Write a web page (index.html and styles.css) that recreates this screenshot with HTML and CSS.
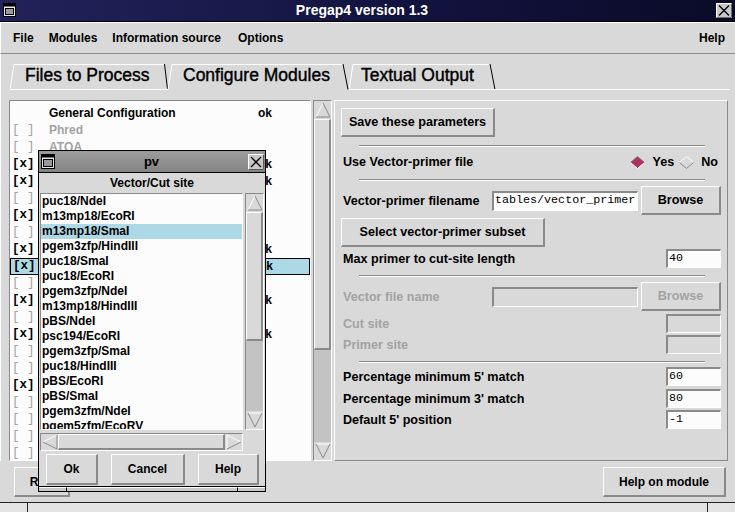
FILE: index.html
```html
<!DOCTYPE html>
<html>
<head>
<meta charset="utf-8">
<title>Pregap4</title>
<link rel="stylesheet" href="styles.css">
</head>
<body>
<div class="titlebar">
  <svg class="wicon" width="13" height="14" viewBox="0 0 13 14"><rect x="0.5" y="0.5" width="12" height="13" fill="#e8e8e8" stroke="#000"/><rect x="0.5" y="0.5" width="12" height="3" fill="#000"/><rect x="2.5" y="5.5" width="8" height="6" fill="#9a9a9a" stroke="#000"/></svg>
  <span class="ttl">Pregap4 version 1.3</span>
  <svg class="wclose" width="16" height="15" viewBox="0 0 16 15"><rect x="0.5" y="0.5" width="15" height="14" fill="#c8c8c8" stroke="#ffffff"/><path d="M15.5 0.5V14.5H0.5" fill="none" stroke="#6a6a6a"/><path d="M3 2.5L13 12.5M13 2.5L3 12.5" stroke="#000" stroke-width="1.3"/></svg>
</div>
<div class="menubar">
  <span>File</span><span>Modules</span><span>Information source</span><span>Options</span><span class="grow"></span><span>Help</span>
</div>
<div class="tabs">
  <div class="tab t1">
    <svg class="tabshape" width="158" height="26" viewBox="0 0 158 26"><path d="M0 25.5L4 0.5H154" fill="none" stroke="#fff"/><path d="M154.5 0L157.5 25" stroke="#000"/><path d="M0 25.5H158" stroke="#fff"/></svg>
    <span>Files to Process</span>
  </div>
  <div class="tab t2">
    <svg class="tabshape" width="182" height="26" viewBox="0 0 182 26"><path d="M1 25.5L5 0.5H176" fill="none" stroke="#fff"/><path d="M176 0L181 25.5" stroke="#000"/></svg>
    <span>Configure Modules</span>
  </div>
  <div class="tab t3">
    <svg class="tabshape" width="147" height="26" viewBox="0 0 147 26"><path d="M0 25.5L4 0.5H141" fill="none" stroke="#fff"/><path d="M141 0L146 25.5" stroke="#000"/><path d="M0 25.5H147" stroke="#fff"/></svg>
    <span>Textual Output</span>
  </div>
  <div class="tabfill"></div>
</div>

<div class="main">
  <div class="listframe">
    <div class="lrow"><span class="cb"></span><span class="nm">General Configuration</span><span class="st">ok</span></div>
    <div class="lrow dis"><span class="cb">[ ]</span><span class="nm">Phred</span><span class="st"></span></div>
    <div class="lrow dis"><span class="cb">[ ]</span><span class="nm">ATQA</span><span class="st"></span></div>
    <div class="lrow"><span class="cb">[x]</span><span class="nm"></span><span class="st">ok</span></div>
    <div class="lrow"><span class="cb">[x]</span><span class="nm"></span><span class="st">ok</span></div>
    <div class="lrow dis"><span class="cb">[ ]</span><span class="nm"></span><span class="st"></span></div>
    <div class="lrow"><span class="cb">[x]</span><span class="nm"></span><span class="st"></span></div>
    <div class="lrow dis"><span class="cb">[ ]</span><span class="nm"></span><span class="st"></span></div>
    <div class="lrow"><span class="cb">[x]</span><span class="nm"></span><span class="st">ok</span></div>
    <div class="lrow sel"><span class="cb">[x]</span><span class="nm"></span><span class="st">ok</span></div>
    <div class="lrow dis"><span class="cb">[ ]</span><span class="nm"></span><span class="st"></span></div>
    <div class="lrow"><span class="cb">[x]</span><span class="nm"></span><span class="st">ok</span></div>
    <div class="lrow dis"><span class="cb">[ ]</span><span class="nm"></span><span class="st"></span></div>
    <div class="lrow"><span class="cb">[x]</span><span class="nm"></span><span class="st">ok</span></div>
    <div class="lrow dis"><span class="cb">[ ]</span><span class="nm"></span><span class="st"></span></div>
    <div class="lrow dis"><span class="cb">[ ]</span><span class="nm"></span><span class="st"></span></div>
    <div class="lrow"><span class="cb">[x]</span><span class="nm"></span><span class="st"></span></div>
    <div class="lrow dis"><span class="cb">[ ]</span><span class="nm"></span><span class="st"></span></div>
    <div class="lrow dis"><span class="cb">[ ]</span><span class="nm"></span><span class="st"></span></div>
    <div class="lrow dis"><span class="cb">[ ]</span><span class="nm"></span><span class="st"></span></div>
    <div class="lrow dis"><span class="cb">[ ]</span><span class="nm"></span><span class="st"></span></div>
  </div>

  <div class="vscroll vs-main">
    <div class="arrow"><svg width="16" height="16" viewBox="0 0 16 16"><path d="M1 15L8 1" stroke="#fff" fill="none"/><path d="M8 1L15 15H1" stroke="#8a8a8a" fill="none"/></svg></div>
    <div class="slider s-main"></div>
    <div class="trough"></div>
    <div class="arrow"><svg width="16" height="16" viewBox="0 0 16 16"><path d="M1 1H15" stroke="#fff" fill="none"/><path d="M1 1L8 15L15 1" stroke="#8a8a8a" fill="none"/></svg></div>
  </div>

  <div class="panel">
    <div class="prow r-save"><button class="btn b-save">Save these parameters</button></div>
    <div class="sep s-a"></div>
    <div class="prow r-use">
      <span class="lbl">Use Vector-primer file</span>
      <span class="radio"><svg width="15" height="13" viewBox="0 0 15 13"><path d="M7.5 0.5L14.5 6.5L7.5 12.5L0.5 6.5Z" fill="#b03060"/><path d="M0.5 6.5L7.5 0.5L14.5 6.5" fill="none" stroke="#7a7a7a"/><path d="M0.5 6.5L7.5 12.5L14.5 6.5" fill="none" stroke="#ffffff"/></svg>Yes</span>
      <span class="radio"><svg width="15" height="13" viewBox="0 0 15 13"><path d="M0.5 6.5L7.5 0.5L14.5 6.5" fill="none" stroke="#ffffff"/><path d="M0.5 6.5L7.5 12.5L14.5 6.5" fill="none" stroke="#8a8a8a"/></svg>No</span>
    </div>
    <div class="sep s-b"></div>
    <div class="prow r-file">
      <span class="lbl">Vector-primer filename</span>
      <span class="entry e-long">tables/vector_primer</span>
      <button class="btn b-browse">Browse</button>
    </div>
    <div class="prow r-select"><button class="btn b-select">Select vector-primer subset</button></div>
    <div class="prow r-small m2"><span class="lbl">Max primer to cut-site length</span><span class="entry e-small">40</span></div>
    <div class="sep s-c"></div>
    <div class="prow r-file r-vfile dis">
      <span class="lbl">Vector file name</span>
      <span class="entry e-long e-dis"></span>
      <button class="btn b-browse">Browse</button>
    </div>
    <div class="prow r-small m3 dis"><span class="lbl">Cut site</span><span class="entry e-small e-dis"></span></div>
    <div class="prow r-small m2 dis"><span class="lbl">Primer site</span><span class="entry e-small e-dis"></span></div>
    <div class="sep s-d"></div>
    <div class="prow r-small m4"><span class="lbl">Percentage minimum 5' match</span><span class="entry e-small">60</span></div>
    <div class="prow r-small m3"><span class="lbl">Percentage minimum 3' match</span><span class="entry e-small">80</span></div>
    <div class="prow r-small m2"><span class="lbl">Default 5' position</span><span class="entry e-small">-1</span></div>
  </div>
</div>

<div class="bottom">
  <button class="btn b-run">Run</button>
  <span class="grow"></span>
  <button class="btn b-help">Help on module</button>
</div>
<div class="status"><span class="f1"></span><span class="f2"></span><span class="f3"></span></div>

<div class="popup">
  <div class="ptitle">
    <svg class="wicon" width="14" height="15" viewBox="0 0 14 15"><rect x="0.5" y="0.5" width="13" height="14" fill="#e8e8e8" stroke="#000"/><rect x="0.5" y="0.5" width="13" height="3" fill="#000"/><rect x="2.5" y="5.5" width="9" height="7" fill="#9a9a9a" stroke="#000"/></svg>
    <span class="ttl">pv</span>
    <svg class="wclose" width="16" height="16" viewBox="0 0 16 16"><rect x="0.5" y="0.5" width="15" height="15" fill="#c8c8c8" stroke="#ffffff"/><path d="M15.5 0.5V15.5H0.5" fill="none" stroke="#5a5a5a"/><path d="M3 3L13 13M13 3L3 13" stroke="#000" stroke-width="1.3"/></svg>
  </div>
  <div class="plabel">Vector/Cut site</div>
  <div class="plist">
    <div class="lbox">
      <div>puc18/NdeI</div>
      <div>m13mp18/EcoRI</div>
      <div class="psel">m13mp18/SmaI</div>
      <div>pgem3zfp/HindIII</div>
      <div>puc18/SmaI</div>
      <div>puc18/EcoRI</div>
      <div>pgem3zfp/NdeI</div>
      <div>m13mp18/HindIII</div>
      <div>pBS/NdeI</div>
      <div>psc194/EcoRI</div>
      <div>pgem3zfp/SmaI</div>
      <div>puc18/HindIII</div>
      <div>pBS/EcoRI</div>
      <div>pBS/SmaI</div>
      <div>pgem3zfm/NdeI</div>
      <div>pgem5zfm/EcoRV</div>
    </div>
    <div class="vscroll vs-pop">
      <div class="arrow"><svg width="16" height="16" viewBox="0 0 16 16"><path d="M1 15L8 1" stroke="#fff" fill="none"/><path d="M8 1L15 15H1" stroke="#8a8a8a" fill="none"/></svg></div>
      <div class="slider s-pop"></div>
      <div class="trough"></div>
      <div class="arrow"><svg width="16" height="16" viewBox="0 0 16 16"><path d="M1 1H15" stroke="#fff" fill="none"/><path d="M1 1L8 15L15 1" stroke="#8a8a8a" fill="none"/></svg></div>
    </div>
    <div class="hscroll">
      <div class="harrow"><svg width="16" height="16" viewBox="0 0 16 16"><path d="M15 1L1 8" stroke="#fff" fill="none"/><path d="M1 8L15 15V1" stroke="#8a8a8a" fill="none"/></svg></div>
      <div class="hslider"></div>
      <div class="harrow"><svg width="16" height="16" viewBox="0 0 16 16"><path d="M1 15V1L15 8" stroke="#fff" fill="none"/><path d="M15 8L1 15" stroke="#8a8a8a" fill="none"/></svg></div>
    </div>
  </div>
  <div class="pbtns">
    <button class="btn pb-ok">Ok</button>
    <button class="btn pb-cancel">Cancel</button>
    <button class="btn pb-help">Help</button>
  </div>
  <div class="pbottom"><span class="g1"></span><span class="g2"></span><span class="g3"></span></div>
</div>
</body>
</html>
```
FILE: styles.css
```css
* { box-sizing: border-box; margin: 0; padding: 0; }
html, body { width: 735px; height: 512px; overflow: hidden; }
body {
  position: relative;
  background: #d9d9d9;
  font-family: "Liberation Sans", Arial, sans-serif;
  font-size: 12px;
  font-weight: bold;
  color: #000;
}
button { font: inherit; color: inherit; cursor: default; }

/* ---------- main title bar ---------- */
.titlebar {
  height: 22px;
  display: flex;
  align-items: center;
  padding: 0 3px 1px 3px;
  background: linear-gradient(to right, #22225a, #131340 55%, #0a0a28);
  border-bottom: 1px solid #000;
}
.titlebar .ttl {
  flex: 1;
  text-align: center;
  color: #fff;
  font-size: 14px;
  padding-right: 8px;
}
.wicon, .wclose { flex: none; display: block; }

/* ---------- menu ---------- */
.menubar {
  height: 32px;
  display: flex;
  align-items: center;
  gap: 15px;
  padding: 0 10px 0 12px;
  border-top: 1px solid #fff;
  border-left: 1px solid #fff;
  border-bottom: 1px solid #8a8a8a;
}
.menubar span:nth-child(4) { margin-left: 2px; }
.grow { flex: 1; }

/* ---------- tabs ---------- */
.tabs {
  height: 36px;
  display: flex;
  padding: 10px 0 0 10px;
  border-left: 1px solid #fff;
}
.tab {
  position: relative;
  height: 26px;
  flex: none;
  font-weight: normal;
  font-size: 17.5px;
  line-height: 23px;
  -webkit-text-stroke: 0.4px #000;
}
.tabshape { position: absolute; left: 0; top: 0; }
.tab span { position: relative; }
.t1 { width: 158px; padding-left: 15px; margin-left: -1px; }
.t2 { width: 182px; padding-left: 16px; margin-left: -1px; }
.t3 { width: 147px; padding-left: 12px; }
.tabfill { flex: 1; height: 26px; border-bottom: 1px solid #fff; margin-right: 5px; }

/* ---------- main area ---------- */
.main {
  height: 371px;
  padding: 10px 7px 0 8px;
  display: grid;
  grid-template-columns: 302px 19px 1fr;
  column-gap: 2px;
  border-left: 1px solid #fff;
}
.listframe {
  background: #fcfcfc;
  border: 1px solid;
  border-color: #8a8a8a #ffffff #ffffff #8a8a8a;
  padding-top: 4px;
  overflow: hidden;
}
.lrow {
  height: 17px;
  display: grid;
  grid-template-columns: 37px 209px 1fr;
  align-items: center;
  padding-left: 2px;
  line-height: 15px;
}
.cb {
  font-family: "Liberation Mono", "Courier New", monospace;
  font-size: 12.5px;
  font-weight: bold;
  white-space: pre;
}
.lrow.dis .cb { color: #a3a3a3; font-weight: normal; }
.lrow.dis .nm { color: #a3a3a3; }
.lrow.sel { background: #add8e6; border: 1px solid #000; height: 17px; }
.lrow.sel .cb { border-right: 1px solid #000; height: 15px; margin-left: -1px; padding-left: 1px; width: 27px; }

/* ---------- scrollbars ---------- */
.vscroll {
  display: flex;
  flex-direction: column;
  background: #c3c3c3;
  border: 1px solid;
  border-color: #8a8a8a #ffffff #ffffff #8a8a8a;
}
.arrow, .harrow {
  flex: none;
  display: flex;
  align-items: center;
  justify-content: center;
  background: #d9d9d9;
}
.arrow { height: 18px; }
.slider {
  flex: none;
  background: #d9d9d9;
  border: 1px solid;
  border-width: 1px 2px 2px 1px;
  border-color: #ffffff #8a8a8a #8a8a8a #ffffff;
}
.s-main { height: 231px; }
.s-pop { height: 129px; }
.trough { flex: 1; }

/* ---------- right panel ---------- */
.panel {
  border: 1px solid;
  border-color: #ffffff #8a8a8a #8a8a8a #ffffff;
  padding: 7px 6px 0 8px;
  display: flex;
  flex-direction: column;
  font-size: 12.6px;
}
.prow { display: flex; align-items: center; flex: none; }
.lbl { flex: 1; white-space: nowrap; }
.dis .lbl, .dis .btn { color: #a3a3a3; }
.btn {
  display: flex;
  align-items: center;
  justify-content: center;
  background: #d9d9d9;
  border: 1px solid;
  border-width: 1px 2px 2px 1px;
  border-color: #ffffff #8a8a8a #8a8a8a #ffffff;
  white-space: nowrap;
}
.r-save { height: 29px; }
.b-save { width: 154px; height: 29px; margin-left: -2px; }
.sep {
  flex: none;
  height: 2px;
  margin: 0 16px 0 16px;
  border-top: 1px solid #8a8a8a;
  border-bottom: 1px solid #ffffff;
}
.s-a { margin-top: 8px; }
.s-b { margin-top: 8px; }
.s-c { margin-top: 7px; }
.s-d { margin-top: 7px; }
.r-use { height: 18px; margin-top: 6px; padding-right: 3px; }
.radio { display: flex; align-items: center; gap: 7px; }
.radio + .radio { margin-left: 5px; }
.r-file { height: 29px; margin-top: 5px; }
.r-vfile { margin-top: 5px; }
.entry {
  display: block;
  background: #fcfcfc;
  border: 1px solid;
  border-width: 2px 1px 1px 2px;
  border-color: #8a8a8a #ffffff #ffffff #8a8a8a;
  font-family: "Liberation Mono", "Courier New", monospace;
  font-weight: normal;
  font-size: 11.7px;
  line-height: 15px;
  padding-left: 1px;
  white-space: nowrap;
  overflow: hidden;
}
.e-long { width: 146px; height: 20px; margin-right: 3px; }
.e-small { width: 55px; height: 19px; }
.e-dis { background: #d9d9d9; }
.b-browse { width: 80px; height: 29px; }
.r-select { height: 29px; margin-top: 3px; }
.b-select { width: 204px; height: 29px; margin-left: -2px; }
.r-small { height: 19px; }
.m2 { margin-top: 2px; }
.m3 { margin-top: 3px; }
.m4 { margin-top: 4px; }

/* ---------- bottom row + status ---------- */
.bottom {
  height: 30px;
  margin-top: 6px;
  display: flex;
  padding: 0 9px 0 14px;
}
.b-run { width: 56px; height: 30px; }
.b-help { width: 123px; height: 30px; }
.status {
  height: 10px;
  margin-top: 5px;
  display: flex;
  border-top: 1px solid #222;
  background: #e4e4e4;
}
.status .f1 { width: 28px; border-right: 1px solid #222; }
.status .f2 { flex: 1; border-right: 1px solid #222; }
.status .f3 { width: 27px; }

/* ---------- popup window "pv" ---------- */
.popup {
  position: absolute;
  left: 38px;
  top: 150px;
  width: 228px;
  height: 342px;
  border: 1px solid #000;
  background: #d9d9d9;
  display: flex;
  flex-direction: column;
}
.ptitle {
  height: 22px;
  flex: none;
  display: flex;
  align-items: center;
  padding: 0 1px 0 2px;
  background: linear-gradient(#9c9c9c, #848484);
  border-bottom: 1px solid #000;
}
.ptitle .ttl { flex: 1; text-align: center; font-size: 13px; }
.plabel {
  height: 20px;
  flex: none;
  display: flex;
  align-items: center;
  justify-content: center;
}
.plist {
  flex: none;
  display: grid;
  grid-template-columns: 203px 19px;
  grid-template-rows: 237px 18px;
  column-gap: 2px;
  row-gap: 3px;
  padding: 0 1px 0 1px;
}
.lbox {
  background: #fcfcfc;
  border: 1px solid;
  border-color: #8a8a8a #ffffff #ffffff #8a8a8a;
  overflow: hidden;
}
.lbox div { height: 15px; line-height: 15px; padding-left: 1px; white-space: nowrap; }
.lbox .psel { background: #add8e6; }
.hscroll {
  display: flex;
  background: #c3c3c3;
  border: 1px solid;
  border-color: #8a8a8a #ffffff #ffffff #8a8a8a;
}
.harrow { width: 17px; }
.hslider {
  flex: 1;
  background: #d9d9d9;
  border: 1px solid;
  border-width: 1px 2px 2px 1px;
  border-color: #ffffff #8a8a8a #8a8a8a #ffffff;
}
.pbtns {
  height: 31px;
  margin-top: 3px;
  flex: none;
  display: flex;
  padding-left: 7px;
}
.pbtns .btn { height: 31px; }
.pb-ok { width: 52px; }
.pb-cancel { width: 74px; margin-left: 13px; }
.pb-help { width: 61px; margin-left: 13px; }
.pbottom {
  flex: 1;
  display: flex;
  margin-top: 1px;
  border-top: 1px solid #000;
}
.pbottom span { border-right: 1px solid #000; border-top: 1px solid #fff; background: #c8c8c8; }
.pbottom .g1 { width: 28px; }
.pbottom .g2 { flex: 1; }
.pbottom .g3 { width: 27px; border-right: none; }
```
